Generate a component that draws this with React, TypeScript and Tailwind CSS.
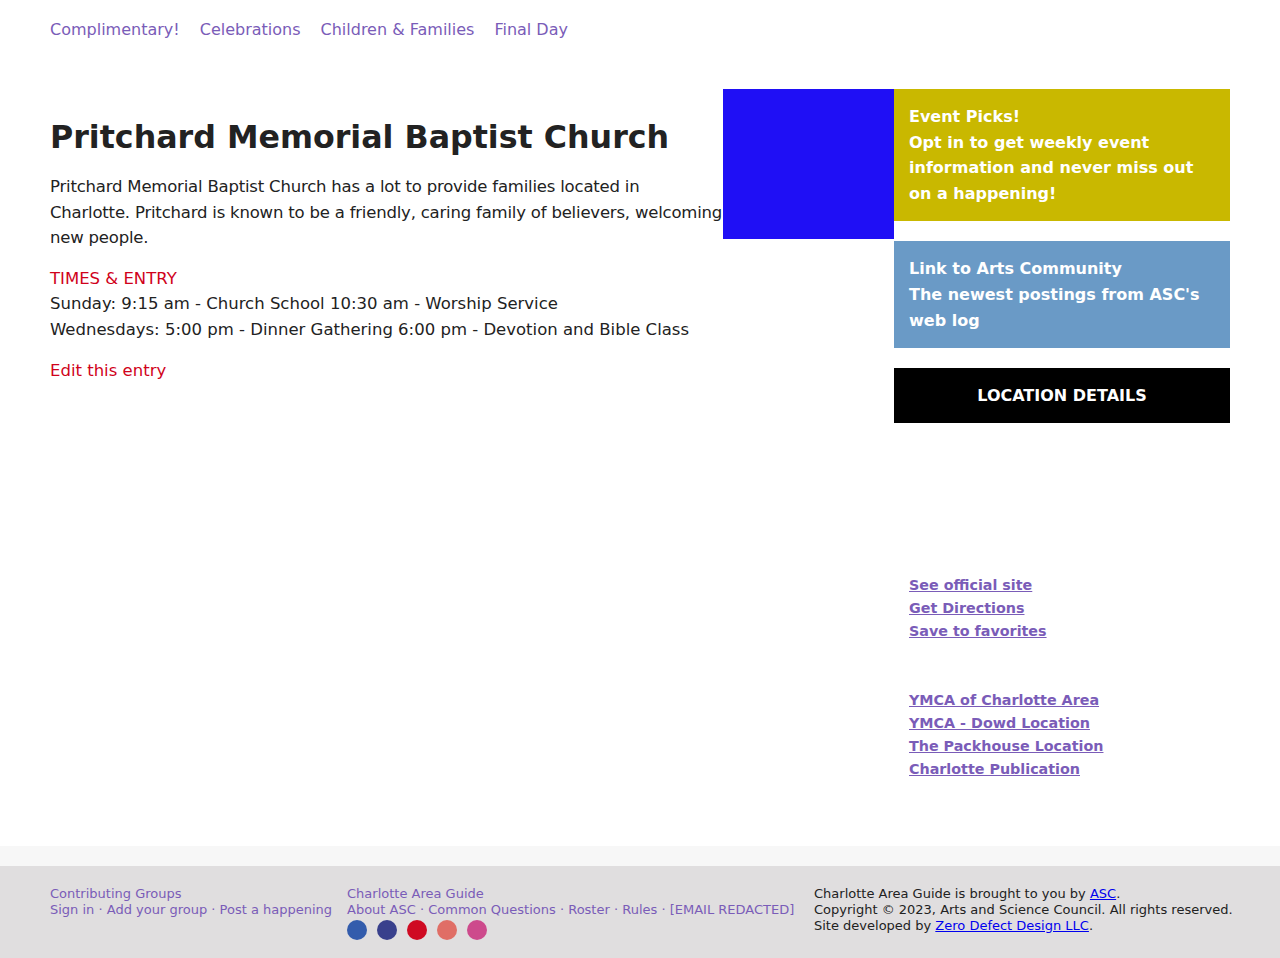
const navLinks = ['Complimentary!', 'Celebrations', 'Children & Families', 'Final Day'];
const detailLinks = ['See official site', 'Get Directions', 'Save to favorites'];
const relatedLinks = ['YMCA of Charlotte Area', 'YMCA - Dowd Location', 'The Packhouse Location', 'Charlotte Publication'];
const dots = ['#335cac', '#39408c', '#cf0a22', '#e06e66', '#cd4a8c'];

const font = { fontFamily: '"DejaVu Sans", Verdana, sans-serif' };

const App = () => {
  return (
    <div className="min-h-[958px] bg-white flex flex-col text-[#222]" style={font}>
      <nav className="flex gap-5 px-[50px] pt-[18px] text-[16px] text-[#7a5cb8]">
        {navLinks.map((l) => (
          <a key={l} href="#" className="leading-6">
            {l}
          </a>
        ))}
      </nav>

      <main className="flex px-[50px] pt-[47px] flex-1">
        <div className="w-[673px] shrink-0 pt-[28px] text-[16.5px] leading-[25.6px]">
          <h1 className="text-[31.7px] font-bold leading-[40px] text-[#222]">
            Pritchard Memorial Baptist Church
          </h1>
          <p className="mt-[17px] tracking-[-0.2px]">
            Pritchard Memorial Baptist Church has a lot to provide families located in Charlotte. Pritchard is known to
            be a friendly, caring family of believers, welcoming new people.
          </p>
          <h3 className="mt-[15px] text-[#d0021b]">TIMES &amp; ENTRY</h3>
          <p>Sunday: 9:15 am - Church School 10:30 am - Worship Service</p>
          <p>Wednesdays: 5:00 pm - Dinner Gathering 6:00 pm - Devotion and Bible Class</p>
          <a href="#" className="block mt-[15px] text-[#d0021b]">
            Edit this entry
          </a>
        </div>

        <div className="w-[171px] h-[150px] shrink-0 bg-[#1f0ff5]" />

        <aside className="w-[336px] shrink-0 flex flex-col">
          <div className="bg-[#c9b800] px-[15px] py-[15px] text-white font-bold text-[16px] leading-[25.6px]">
            <div>Event Picks!</div>
            <div>Opt in to get weekly event information and never miss out on a happening!</div>
          </div>
          <div className="mt-[20px] bg-[#6a9ac6] px-[15px] py-[15px] text-white font-bold text-[16px] leading-[25.6px]">
            <div>Link to Arts Community</div>
            <div>The newest postings from ASC's web log</div>
          </div>
          <div className="mt-[20px] h-[55px] bg-black flex items-center justify-center text-white font-bold text-[16px] uppercase">
            Location Details
          </div>
          <div className="h-[151px]" />
          <ul className="px-[15px] text-[14.3px] leading-[23px] font-bold">
            {detailLinks.map((l) => (
              <li key={l}>
                <a href="#" className="underline text-[#7a5cb8]">
                  {l}
                </a>
              </li>
            ))}
          </ul>
          <ul className="px-[15px] mt-[46px] text-[14.3px] leading-[23px] font-bold">
            {relatedLinks.map((l) => (
              <li key={l}>
                <a href="#" className="underline text-[#7a5cb8]">
                  {l}
                </a>
              </li>
            ))}
          </ul>
        </aside>
      </main>

      <div className="h-[20px] bg-[#f7f7f7]" />
      <footer className="h-[92px] bg-[#e0dedf] px-[50px] pt-[20px] flex text-[13px] leading-[16px] whitespace-nowrap">
        <div className="w-[297px] shrink-0 text-[#7a5cb8]">
          <div>Contributing Groups</div>
          <div>Sign in · Add your group · Post a happening</div>
        </div>
        <div className="w-[467px] shrink-0 text-[#7a5cb8]">
          <div>Charlotte Area Guide</div>
          <div>About ASC · Common Questions · Roster · Rules · [EMAIL REDACTED]</div>
          <div className="flex gap-[10px] mt-[2px]">
            {dots.map((c) => (
              <span key={c} className="w-[20px] h-[20px] rounded-full" style={{ backgroundColor: c }} />
            ))}
          </div>
        </div>
        <div className="shrink-0 text-[#222]">
          <div>
            Charlotte Area Guide is brought to you by{' '}
            <a href="#" className="underline text-[#0000ee]">
              ASC
            </a>
            .
          </div>
          <div>Copyright © 2023, Arts and Science Council. All rights reserved.</div>
          <div>
            Site developed by{' '}
            <a href="#" className="underline text-[#0000ee]">
              Zero Defect Design LLC
            </a>
            .
          </div>
        </div>
      </footer>
    </div>
  );
};

export default App;
